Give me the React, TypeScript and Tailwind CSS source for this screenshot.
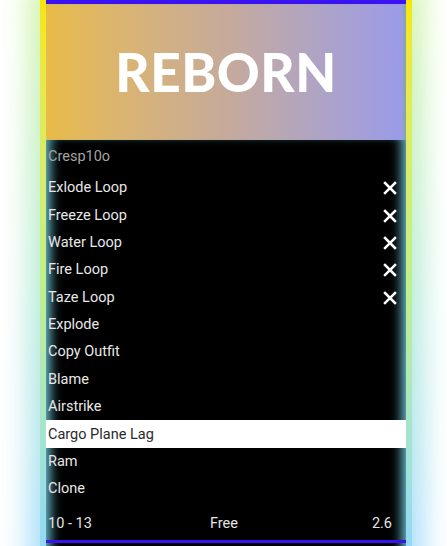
const ITEMS: Array<{ label: string; toggled?: boolean; selected?: boolean }> = [
  { label: "Exlode Loop", toggled: true },
  { label: "Freeze Loop", toggled: true },
  { label: "Water Loop", toggled: true },
  { label: "Fire Loop", toggled: true },
  { label: "Taze Loop", toggled: true },
  { label: "Explode" },
  { label: "Copy Outfit" },
  { label: "Blame" },
  { label: "Airstrike" },
  { label: "Cargo Plane Lag", selected: true },
  { label: "Ram" },
  { label: "Clone" },
];

function CrossIcon() {
  return (
    <svg width="14" height="14" viewBox="0 0 14 14" fill="none">
      <path d="M2 2L12 12M12 2L2 12" stroke="white" strokeWidth="2.5" strokeLinecap="square" />
    </svg>
  );
}

export default function App() {
  return (
    <div
      className="h-[546px] overflow-hidden bg-white"
      style={{ fontFamily: "Roboto, 'Liberation Sans', sans-serif" }}
    >
      <div className="relative ml-[40px] w-[372px]">
        {/* outer glow */}
        <div className="absolute -inset-x-[12px] -top-4 h-[600px] bg-gradient-to-b from-[#d4f4a8] via-[#b8ecd8] to-[#a8ddff] blur-[14px]" />

        {/* frame */}
        <div className="relative bg-gradient-to-b from-[#f6e600] via-[#bff08a] to-[#8fd6ff] px-[6px] pb-4">
          <div className="h-[4px] bg-[#3b12f2]" />

          {/* header */}
          <div className="h-[136px] flex items-center justify-center bg-gradient-to-r from-[#e9bb46] via-[#c6aa9a] to-[#9a9aea] shadow-[inset_-3px_0_3px_-1px_#86a89a]">
            <span
              className="text-white text-[53px] font-black tracking-[0.5px] leading-none pb-[2px]"
              style={{ fontFamily: "Lato, 'Open Sans', sans-serif" }}
            >
              REBORN
            </span>
          </div>

          {/* menu */}
          <div className="bg-black shadow-[inset_12px_0_12px_-8px_#6fc6d8,inset_-12px_0_12px_-8px_#6fc6d8]">
            <div className="h-[34px] flex items-center pl-[2px] text-[14.5px] text-[#a4a4a4]">
              Cresp10o
            </div>

            {ITEMS.map((item) => (
              <div
                key={item.label}
                className={`h-[27.36px] flex items-center justify-between pl-[2px] pr-[9px] pt-[1px] text-[14.5px] ${
                  item.selected ? "bg-white text-[#2a2a2a]" : "text-[#e8e8e8]"
                }`}
              >
                <span>{item.label}</span>
                {item.toggled && <CrossIcon />}
              </div>
            ))}

            <div className="h-[38px] flex items-center pt-[6px] pl-[2px] pr-[14px] text-[14.5px] text-[#e4e4e4]">
              <span className="flex-1">10 - 13</span>
              <span className="pl-[8px]">Free</span>
              <span className="flex-1 text-right">2.6</span>
            </div>

            <div className="h-[3px] bg-[#3b12f2]" />
            <div className="h-[10px]" />
          </div>
        </div>
      </div>
    </div>
  );
}
